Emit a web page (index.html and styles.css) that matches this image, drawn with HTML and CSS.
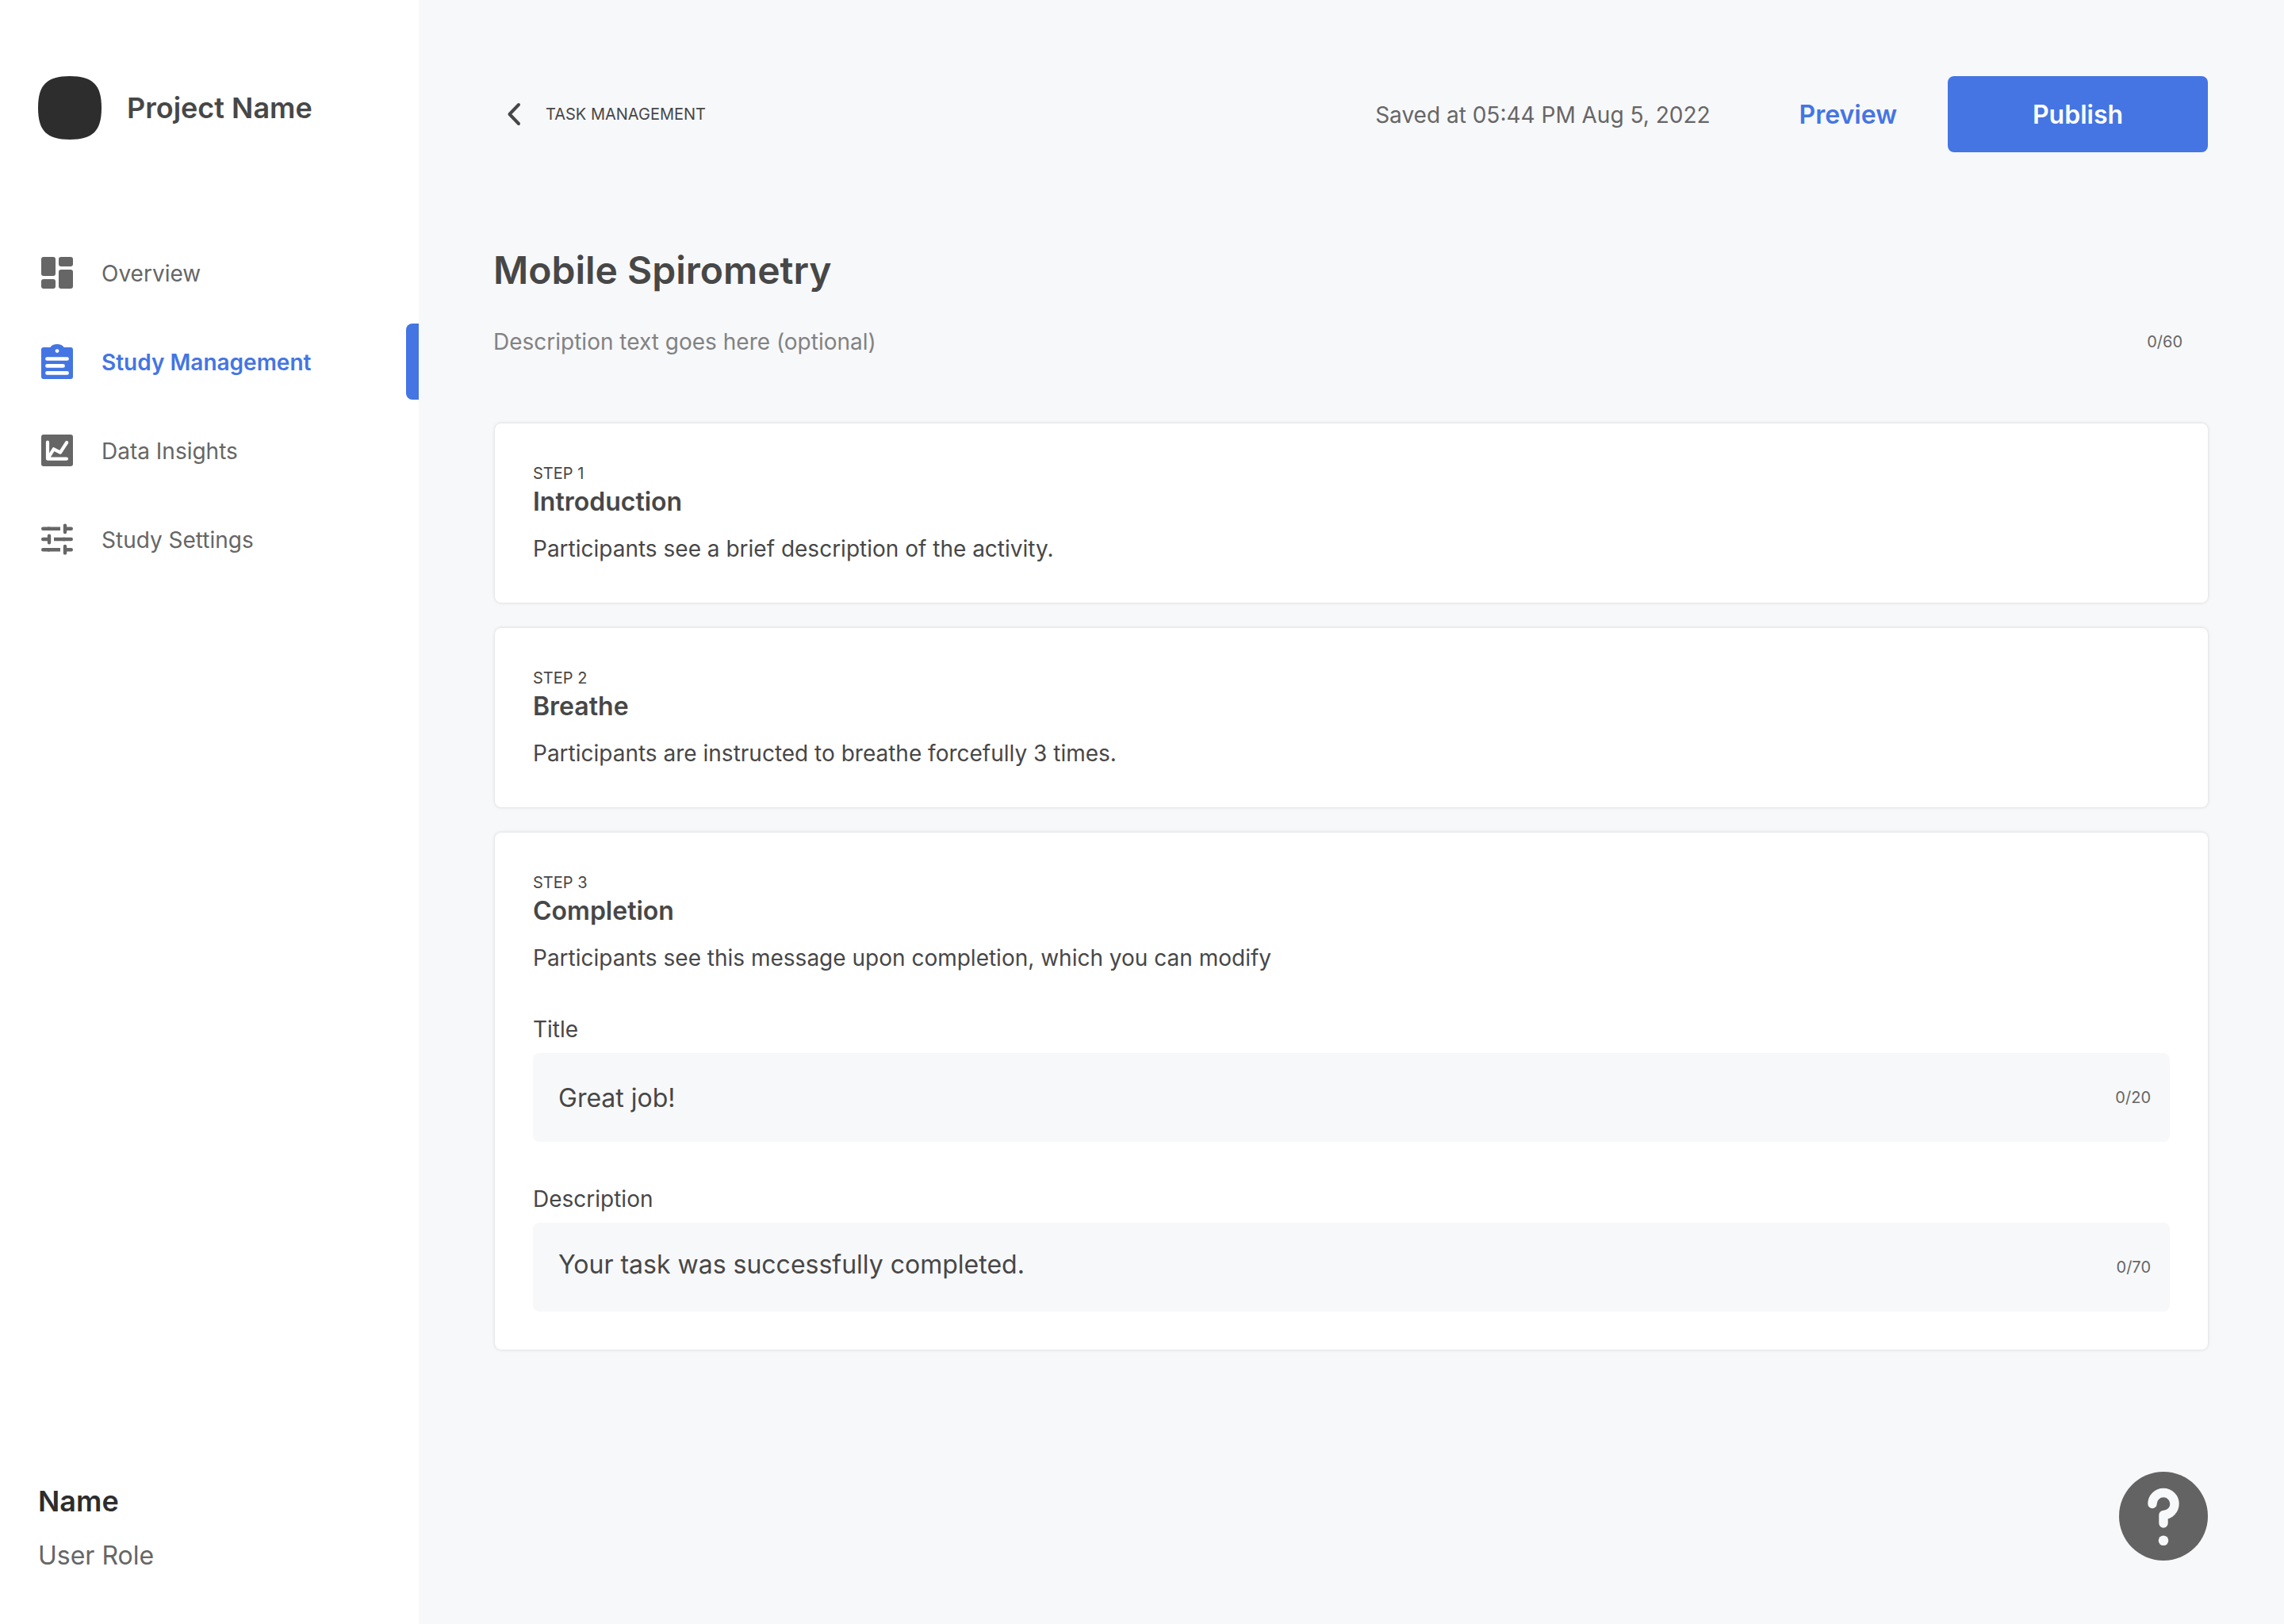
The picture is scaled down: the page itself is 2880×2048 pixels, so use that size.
FILE: index.html
```
<!DOCTYPE html>
<html lang="en">
<head>
<meta charset="utf-8">
<meta name="viewport" content="width=device-width, initial-scale=1">
<title>Mobile Spirometry</title>
<link rel="stylesheet" href="styles.css">
</head>
<body>
<div class="app">
  <aside class="sidebar">
    <div class="brand">
      <svg class="brand-logo" viewBox="0 0 80 80" aria-hidden="true"><path d="M0 40C0 11 11 0 40 0S80 11 80 40 69 80 40 80 0 69 0 40Z"/></svg>
      <span class="brand-name">Project Name</span>
    </div>
    <nav class="nav" aria-label="Main">
      <a class="nav-item" href="#overview">
        <svg class="nav-icon" viewBox="0 0 48 48" aria-hidden="true"><g fill="currentColor"><rect x="4" y="4" width="18" height="24" rx="3"/><rect x="26" y="4" width="18" height="12" rx="3"/><rect x="4" y="32" width="18" height="12" rx="3"/><rect x="26" y="20" width="18" height="24" rx="3"/></g></svg>
        <span class="nav-text">Overview</span>
      </a>
      <a class="nav-item nav-item-active" href="#study" aria-current="page">
        <svg class="nav-icon" viewBox="0 0 48 48" aria-hidden="true"><path fill="currentColor" d="M7 6H15.400C17 3.500 20 2 24 2S31 3.500 32.600 6H41A3 3 0 0 1 44 9V43A3 3 0 0 1 41 46H7A3 3 0 0 1 4 43V9A3 3 0 0 1 7 6Z"/><circle cx="24" cy="10.600" r="2.400" fill="#fff"/><path d="M11.400 20.500H36.600M11.400 29.400H31.600M11.400 38.400H36.600" fill="none" stroke="#fff" stroke-width="4.600" stroke-linecap="round"/></svg>
        <span class="nav-text">Study Management</span>
      </a>
      <a class="nav-item" href="#insights">
        <svg class="nav-icon" viewBox="0 0 48 48" aria-hidden="true"><rect x="4" y="4" width="40" height="40" rx="3" fill="currentColor"/><path d="M12 13.500V34.600H36M12.800 33.500L19.700 22.300L28 26.600L36.200 14" fill="none" stroke="#fff" stroke-width="4.200" stroke-linecap="round" stroke-linejoin="round"/></svg>
        <span class="nav-text">Data Insights</span>
      </a>
      <a class="nav-item" href="#settings">
        <svg class="nav-icon" viewBox="0 0 48 48" aria-hidden="true"><g fill="none" stroke="currentColor" stroke-width="4.400"><path stroke-linecap="round" d="M6.200 10.700H14M34 6.600V15M34 10.700H41.800M6.200 24H14M14 19.800V28.200M32 24H41.800M6.200 37.300H14M34 33V41.400M34 37.300H41.800"/><path d="M12 10.700H28M20 24H34M12 37.300H28"/></g></svg>
        <span class="nav-text">Study Settings</span>
      </a>
    </nav>
    <div class="user">
      <span class="user-name">Name</span>
      <span class="user-role">User Role</span>
    </div>
  </aside>

  <main class="main">
    <header class="topbar">
      <a class="back" href="#tasks">
        <svg class="back-icon" viewBox="0 0 48 48" aria-hidden="true"><path d="M30 12L18.500 24L30 36" fill="none" stroke="currentColor" stroke-width="4" stroke-linecap="round" stroke-linejoin="round"/></svg>
        <span>TASK MANAGEMENT</span>
      </a>
      <span class="saved">Saved at 05:44 PM Aug 5, 2022</span>
      <button class="btn btn-text" type="button">Preview</button>
      <button class="btn btn-primary" type="button">Publish</button>
    </header>

    <section class="intro">
      <h1 class="title">Mobile Spirometry</h1>
      <div class="intro-field">
        <input class="intro-input" type="text" aria-label="Task description" placeholder="Description text goes here (optional)">
        <span class="counter">0/60</span>
      </div>
    </section>

    <div class="steps">
      <section class="card">
        <p class="step">STEP 1</p>
        <h2 class="card-title">Introduction</h2>
        <p class="card-text">Participants see a brief description of the activity.</p>
      </section>
      <section class="card">
        <p class="step">STEP 2</p>
        <h2 class="card-title">Breathe</h2>
        <p class="card-text">Participants are instructed to breathe forcefully 3 times.</p>
      </section>
      <section class="card">
        <p class="step">STEP 3</p>
        <h2 class="card-title">Completion</h2>
        <p class="card-text">Participants see this message upon completion, which you can modify</p>
        <form class="form">
          <div class="field">
            <label class="label" for="done-title">Title</label>
            <div class="box">
              <input class="input" id="done-title" type="text" value="Great job!">
              <span class="counter">0/20</span>
            </div>
          </div>
          <div class="field">
            <label class="label" for="done-text">Description</label>
            <div class="box">
              <textarea class="input input-area" id="done-text" rows="1">Your task was successfully completed.</textarea>
              <span class="counter">0/70</span>
            </div>
          </div>
        </form>
      </section>
    </div>

    <button class="help" type="button" aria-label="Help">
      <svg class="help-icon" viewBox="0 0 112 112" aria-hidden="true"><circle cx="56" cy="56" r="56" fill="#636363"/><path d="M42 40.500A14 14 0 1 1 56 54.500V65" fill="none" stroke="#f7f8fa" stroke-width="11.400" stroke-linecap="round" stroke-linejoin="round"/><circle cx="56" cy="86.700" r="6.300" fill="#f7f8fa"/></svg>
    </button>
  </main>
</div>
</body>
</html>
```
FILE: styles.css
```
* {
  box-sizing: border-box;
}

body {
  margin: 0;
  background: #f7f8fa;
  color: #474747;
  font-family: Inter, "Liberation Sans", sans-serif;
  font-size: 28px;
  line-height: 40px;
}

h1, h2, p {
  margin: 0;
}

a {
  color: inherit;
  text-decoration: none;
}

button, input, textarea {
  margin: 0;
  padding: 0;
  border: 0;
  background: none;
  color: inherit;
  font: inherit;
}

.app {
  display: flex;
  min-height: 100vh;
}

/* Sidebar */
.sidebar {
  display: flex;
  flex: 0 0 528px;
  flex-direction: column;
  padding: 96px 0 66px;
  background: #fff;
}

.brand {
  display: flex;
  align-items: center;
  gap: 32px;
  padding: 0 48px;
}

.brand-logo {
  width: 80px;
  height: 80px;
  fill: #2d2d2d;
}

.brand-name,
.user-name {
  font-size: 36px;
  font-weight: 600;
  line-height: 44px;
}

.nav {
  display: flex;
  flex-direction: column;
  gap: 16px;
  margin-top: 120px;
}

.nav-item {
  display: flex;
  align-items: center;
  gap: 32px;
  height: 96px;
  padding-left: 48px;
  color: #666;
}

.nav-text,
.saved {
  padding-top: 2px;
}

.nav-item-active {
  color: #4475e3;
  font-weight: 600;
}

.nav-item-active::after {
  width: 16px;
  height: 96px;
  margin-left: auto;
  border-radius: 8px 0 0 8px;
  background: #4475e3;
  content: "";
}

.nav-icon {
  width: 48px;
  height: 48px;
}

.user {
  display: flex;
  flex-direction: column;
  gap: 27px;
  margin-top: auto;
  padding: 0 48px;
}

.user-name {
  color: #2d2d2d;
}

.user-role {
  color: #666;
  font-size: 32px;
}

/* Main column */
.main {
  display: flex;
  flex: 1;
  flex-direction: column;
  min-width: 0;
  padding: 96px 96px 80px;
}

.topbar {
  display: flex;
  align-items: center;
}

.back {
  display: flex;
  align-items: center;
  gap: 16px;
  margin-right: auto;
  font-size: 20px;
}

.back-icon {
  width: 48px;
  height: 48px;
}

.saved {
  color: #666;
}

.btn {
  height: 96px;
  padding-top: 2px;
  border-radius: 8px;
  font-size: 32px;
  font-weight: 600;
}

.btn-text {
  margin-left: 48px;
  padding: 2px 64px 0;
  color: #4475e3;
}

.btn-primary {
  width: 328px;
  background: #4475e3;
  color: #fff;
}

.intro {
  margin: 120px 0 0 -2px;
}

.title {
  font-size: 48px;
  font-weight: 600;
  line-height: 58px;
}

.intro-field {
  display: flex;
  align-items: center;
  margin-top: 41px;
  padding-right: 32px;
}

.intro-input {
  flex: 1;
  height: 40px;
}

.intro-input::placeholder {
  color: #828282;
}

.counter {
  color: #666;
  font-size: 20px;
  line-height: 30px;
}

.steps {
  display: flex;
  flex-direction: column;
  gap: 32px;
  margin-top: 83px;
}

.card {
  padding: 48px;
  border-radius: 8px;
  background: #fff;
  box-shadow: 0 0 4px rgba(0, 0, 0, 0.15);
}

.step {
  font-size: 20px;
  line-height: 30px;
}

.card-title {
  font-size: 32px;
  font-weight: 600;
  line-height: 42px;
}

.card-text {
  margin-top: 18px;
}

.form {
  display: flex;
  flex-direction: column;
  gap: 52px;
  margin-top: 50px;
}

.field {
  display: flex;
  flex-direction: column;
  gap: 10px;
}

.box {
  display: flex;
  align-items: center;
  height: 112px;
  padding: 0 24px 0 32px;
  border-radius: 8px;
  background: #f7f8fa;
}

.input {
  flex: 1;
  height: 48px;
  font-size: 32px;
}

.input-area {
  line-height: 42px;
  overflow: hidden;
  resize: none;
}

.help {
  align-self: flex-end;
  width: 112px;
  height: 112px;
  margin-top: auto;
  border-radius: 50%;
}

.help-icon {
  display: block;
}
```
